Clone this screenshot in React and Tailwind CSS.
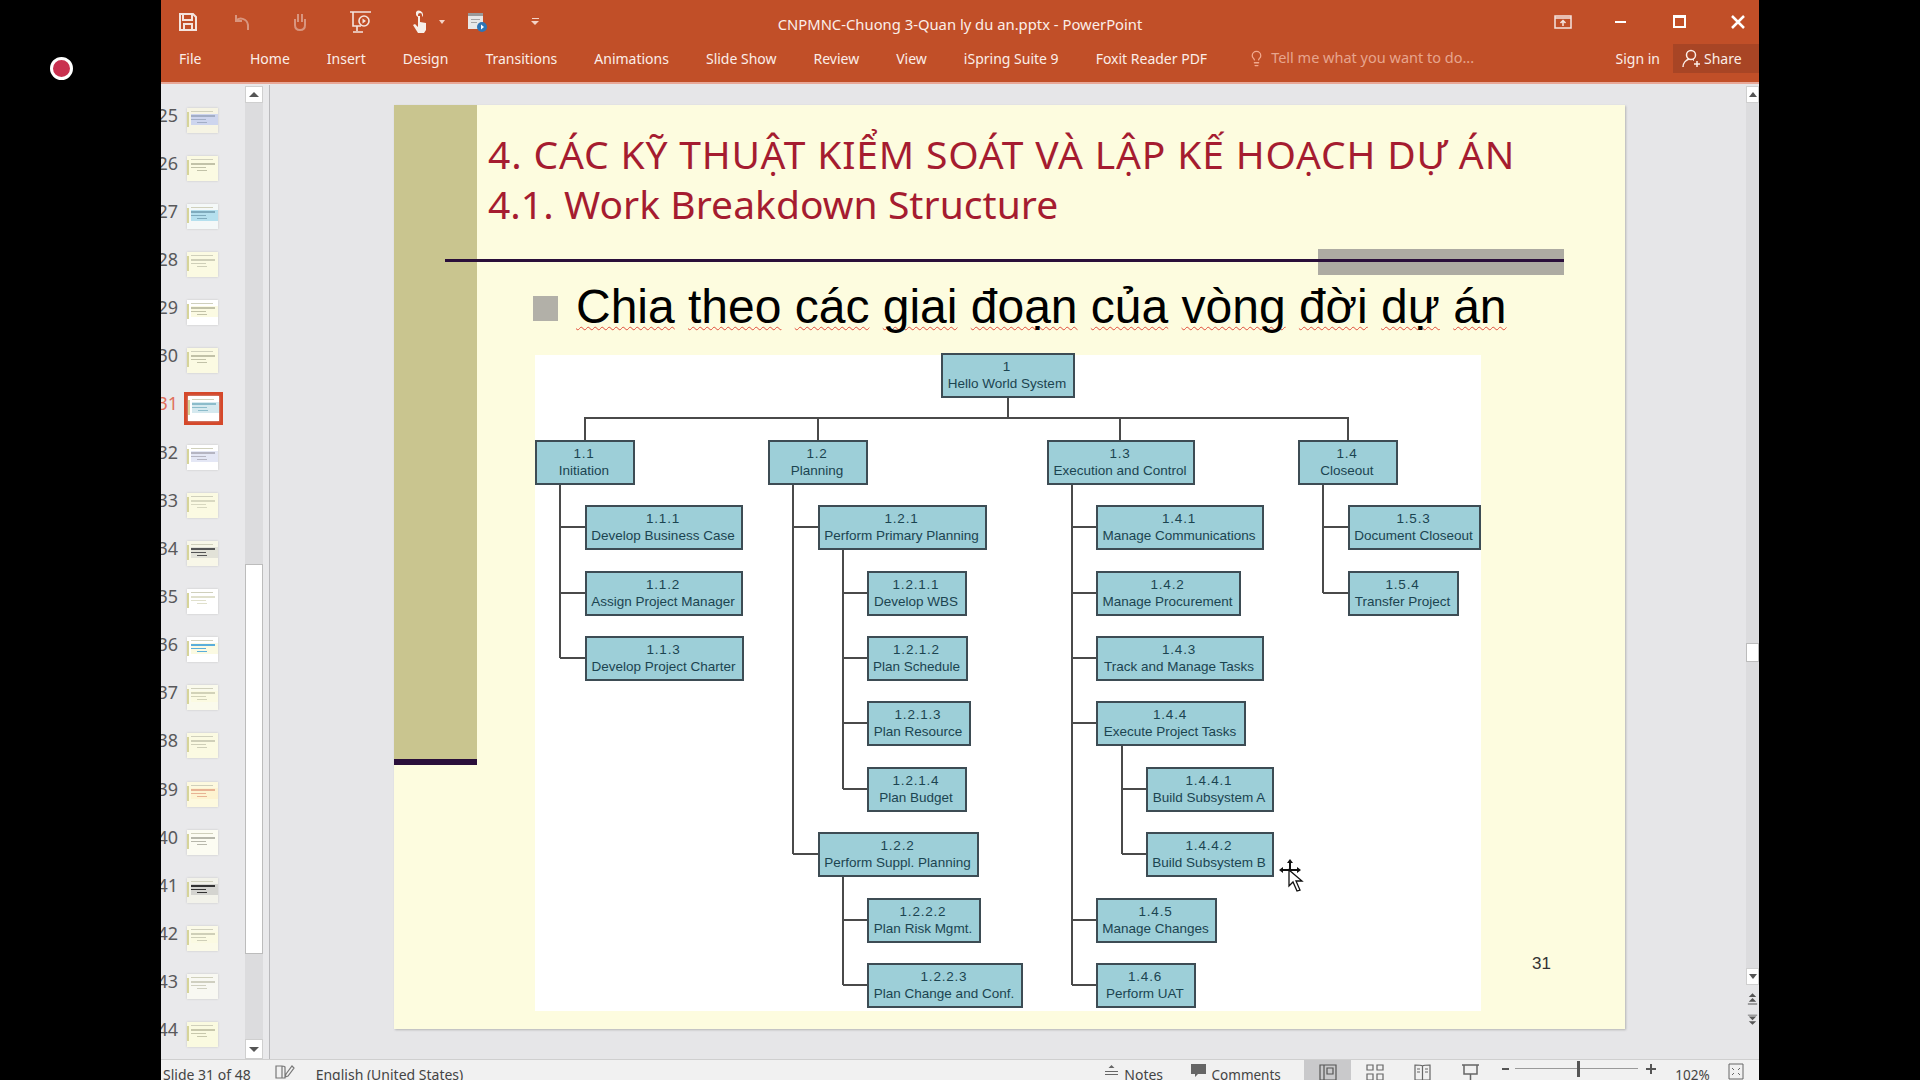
import { Lightbulb } from 'lucide-react';

const ui = "font-['Noto_Sans',sans-serif]";

const tabs = ['Home', 'Insert', 'Design', 'Transitions', 'Animations', 'Slide Show', 'Review', 'View', 'iSpring Suite 9', 'Foxit Reader PDF'];

const bulletWords = ['Chia', 'theo', 'các', 'giai', 'đoạn', 'của', 'vòng', 'đời', 'dự', 'án'];

// look of each mini slide in the left pane
const thumbs = [
  { n: 25, bg: 'bg-[#f6f4e4]', mid: 'bg-[#cdd5ee]', line: 'bg-[#a3aec6]' },
  { n: 26, bg: 'bg-[#fbfae2]', mid: 'bg-[#fbfae2]', line: 'bg-[#c2c2a8]' },
  { n: 27, bg: 'bg-[#f4f8f8]', mid: 'bg-[#b5e0ee]', line: 'bg-[#7fabbd]' },
  { n: 28, bg: 'bg-[#fbfae2]', mid: 'bg-[#fbfae2]', line: 'bg-[#cfcfb8]' },
  { n: 29, bg: 'bg-[#ffffff]', mid: 'bg-[#fbfae2]', line: 'bg-[#c2c2a8]' },
  { n: 30, bg: 'bg-[#fbfae2]', mid: 'bg-[#fbfae2]', line: 'bg-[#c2c2a8]' },
  { n: 31, bg: 'bg-[#ffffff]', mid: 'bg-[#d5e9ef]', line: 'bg-[#8cbccb]', active: true },
  { n: 32, bg: 'bg-[#ffffff]', mid: 'bg-[#e4e7f5]', line: 'bg-[#b5b5c2]' },
  { n: 33, bg: 'bg-[#fbfae2]', mid: 'bg-[#fbfae2]', line: 'bg-[#d8d8c0]' },
  { n: 34, bg: 'bg-[#f8f7e8]', mid: 'bg-[#e2e2d8]', line: 'bg-[#555555]' },
  { n: 35, bg: 'bg-[#ffffff]', mid: 'bg-[#ffffff]', line: 'bg-[#e0e0cc]' },
  { n: 36, bg: 'bg-[#ffffff]', mid: 'bg-[#fbfae2]', line: 'bg-[#5aaedb]' },
  { n: 37, bg: 'bg-[#fafaec]', mid: 'bg-[#fbfae2]', line: 'bg-[#d2d2b8]' },
  { n: 38, bg: 'bg-[#fbfae2]', mid: 'bg-[#fbfae2]', line: 'bg-[#cfcfb8]' },
  { n: 39, bg: 'bg-[#fdf9de]', mid: 'bg-[#fdf3d0]', line: 'bg-[#e8b394]' },
  { n: 40, bg: 'bg-[#fcfcf2]', mid: 'bg-[#fcfcf2]', line: 'bg-[#b8b8ac]' },
  { n: 41, bg: 'bg-[#f2f2ea]', mid: 'bg-[#d4d4d0]', line: 'bg-[#333333]' },
  { n: 42, bg: 'bg-[#fbfae8]', mid: 'bg-[#fbfae2]', line: 'bg-[#cfcfb8]' },
  { n: 43, bg: 'bg-[#f8f8f2]', mid: 'bg-[#f8f8f2]', line: 'bg-[#cfcfc0]' },
  { n: 44, bg: 'bg-[#fafae0]', mid: 'bg-[#fafae0]', line: 'bg-[#c8c8ac]' },
];

// diagram rows (page y of the top edge of a box)
const R = [505, 571, 636, 701, 767, 832, 898, 963];

const nodes = [
  { id: '1', label: 'Hello World System', x: 941, r: 1075, y: 353 },
  { id: '1.1', label: 'Initiation', x: 535, r: 635, y: 440 },
  { id: '1.2', label: 'Planning', x: 768, r: 868, y: 440 },
  { id: '1.3', label: 'Execution and Control', x: 1047, r: 1195, y: 440 },
  { id: '1.4', label: 'Closeout', x: 1298, r: 1398, y: 440 },
  { id: '1.1.1', label: 'Develop Business Case', x: 585, r: 743, y: R[0] },
  { id: '1.1.2', label: 'Assign Project Manager', x: 585, r: 743, y: R[1] },
  { id: '1.1.3', label: 'Develop Project Charter', x: 585, r: 744, y: R[2] },
  { id: '1.2.1', label: 'Perform Primary Planning', x: 818, r: 987, y: R[0] },
  { id: '1.2.1.1', label: 'Develop WBS', x: 867, r: 967, y: R[1] },
  { id: '1.2.1.2', label: 'Plan Schedule', x: 867, r: 968, y: R[2] },
  { id: '1.2.1.3', label: 'Plan Resource', x: 867, r: 971, y: R[3] },
  { id: '1.2.1.4', label: 'Plan Budget', x: 867, r: 967, y: R[4] },
  { id: '1.2.2', label: 'Perform Suppl. Planning', x: 818, r: 979, y: R[5] },
  { id: '1.2.2.2', label: 'Plan Risk Mgmt.', x: 867, r: 981, y: R[6] },
  { id: '1.2.2.3', label: 'Plan Change and Conf.', x: 867, r: 1023, y: R[7] },
  { id: '1.4.1', label: 'Manage Communications', x: 1096, r: 1264, y: R[0] },
  { id: '1.4.2', label: 'Manage Procurement', x: 1096, r: 1241, y: R[1] },
  { id: '1.4.3', label: 'Track and Manage Tasks', x: 1096, r: 1264, y: R[2] },
  { id: '1.4.4', label: 'Execute Project Tasks', x: 1096, r: 1246, y: R[3] },
  { id: '1.4.4.1', label: 'Build Subsystem A', x: 1146, r: 1274, y: R[4] },
  { id: '1.4.4.2', label: 'Build Subsystem B', x: 1146, r: 1274, y: R[5] },
  { id: '1.4.5', label: 'Manage Changes', x: 1096, r: 1217, y: R[6] },
  { id: '1.4.6', label: 'Perform UAT', x: 1096, r: 1196, y: R[7] },
  { id: '1.5.3', label: 'Document Closeout', x: 1348, r: 1481, y: R[0] },
  { id: '1.5.4', label: 'Transfer Project', x: 1348, r: 1459, y: R[1] },
];

// trunk x, start y, and the rows hanging off it
const trunks = [
  { x: 560, y: 484, to: 585, rows: [0, 1, 2] },
  { x: 793, y: 484, to: 818, rows: [0, 5] },
  { x: 843, y: 549, to: 867, rows: [1, 2, 3, 4] },
  { x: 843, y: 877, to: 867, rows: [6, 7] },
  { x: 1072, y: 484, to: 1096, rows: [0, 1, 2, 3, 6, 7] },
  { x: 1122, y: 746, to: 1146, rows: [4, 5] },
  { x: 1323, y: 484, to: 1348, rows: [0, 1] },
];

const Thumb = ({ t }) => (
  <div className={`flex h-[25px] w-[31px] shadow-[0_0_2px_#c4c4c4] ${t.bg}`}>
    <div className="mt-[4px] h-[15px] w-[2px] shrink-0 bg-[#d6d49a]" />
    <div className="flex flex-1 flex-col pl-[2px]">
      <div className="mt-[3px] h-[1px] w-[22px] bg-[#d0d0bc]" />
      <div className={`mt-[2px] flex h-[11px] flex-col gap-[2px] pt-[1px] ${t.mid}`}>
        <div className={`h-[2px] w-[24px] ${t.line}`} />
        <div className={`h-[1px] w-[15px] ${t.line}`} />
        <div className={`ml-[6px] h-[1px] w-[10px] ${t.line}`} />
      </div>
    </div>
  </div>
);

const Sidebar = () => (
  <div className={`flex w-[109px] shrink-0 overflow-hidden bg-[#e9e9eb] ${ui}`}>
    <div className="flex w-[84px] shrink-0 flex-col pt-[12px]">
      {thumbs.map((t) => (
        <div key={t.n} className="flex h-[48.15px] shrink-0 items-center">
          <div className={`flex w-[17px] shrink-0 justify-end pb-[11px] text-[18px] leading-[20px] ${t.active ? 'text-[#e0705c]' : 'text-[#59595b]'}`}>
            <span className="shrink-0">{t.n}</span>
          </div>
          {t.active ? (
            <div className="ml-[6px] border-[4px] border-[#d5482a]">
              <Thumb t={t} />
            </div>
          ) : (
            <div className="ml-[9px]">
              <Thumb t={t} />
            </div>
          )}
        </div>
      ))}
    </div>
    <div className="mt-[2px] flex h-[973px] w-[18px] shrink-0 flex-col bg-[#dcdcde]">
      <div className="flex h-[17px] shrink-0 items-center justify-center border border-[#cfcfcf] bg-white">
        <div className="h-0 w-0 border-x-[5px] border-b-[5px] border-x-transparent border-b-[#555555]" />
      </div>
      <div className="mt-[461px] h-[390px] shrink-0 border border-[#bcbcbc] bg-white" />
      <div className="mt-auto flex h-[20px] shrink-0 items-center justify-center border border-[#cfcfcf] bg-white">
        <div className="h-0 w-0 border-x-[5px] border-t-[5px] border-x-transparent border-t-[#555555]" />
      </div>
    </div>
    <div className="ml-[6px] mt-[1px] h-[975px] w-[1px] bg-[#b9b9bc]" />
  </div>
);

const Node = ({ n }) => (
  <div
    className="absolute flex h-[45px] flex-col items-center justify-center border-2 border-[#3d4c54] bg-[#9dcfd8] pr-[2px] font-['Liberation_Sans',sans-serif] text-[13.5px] leading-[16.5px] text-[#1b4450]"
    style={{ left: n.x - 535, top: n.y - 355, width: n.r - n.x }}
  >
    <span className="tracking-[0.8px]">{n.id}</span>
    <span className="whitespace-nowrap">{n.label}</span>
  </div>
);

const Diagram = () => (
  <div className="relative ml-[58px] h-[656px] w-[946px] bg-white">
    <svg className="absolute inset-0" width="946" height="656" viewBox="535 355 946 656" fill="none" stroke="#4a4a4a" strokeWidth="2">
      <path d="M585 440V418H1348V440M818 418V440M1120 418V440M1008 397V418" />
      {trunks.map((t) => (
        <path
          key={`${t.x}-${t.y}`}
          d={`M${t.x} ${t.y}V${R[t.rows[t.rows.length - 1]] + 22}` + t.rows.map((r) => `M${t.x} ${R[r] + 22}H${t.to}`).join('')}
        />
      ))}
    </svg>
    {nodes.map((n) => (
      <Node key={n.id} n={n} />
    ))}
  </div>
);

const Slide = () => (
  <div className="relative flex h-[924px] w-[1231px] bg-[#fdfcdf] shadow-[1px_1px_2px_#b5b5b5]">
    <div className="flex w-[83px] shrink-0 flex-col">
      <div className="h-[654px] bg-[#c9c58f]" />
      <div className="h-[6px] bg-[#2a0f3a]" />
    </div>
    <div className="flex flex-col">
      <div className="h-[130px] pl-[11px] pt-[24px] font-['Noto_Sans',sans-serif] text-[39px] leading-[50px] text-[#a51c30]">
        <div className="whitespace-nowrap tracking-[0.85px]">4. CÁC KỸ THUẬT KIỂM SOÁT VÀ LẬP KẾ HOẠCH DỰ ÁN</div>
        <div className="whitespace-nowrap tracking-[0.05px]">4.1. Work Breakdown Structure</div>
      </div>
      <div className="flex h-[120px] items-start gap-[18px] pl-[56px] pt-[44px] font-['Liberation_Sans',sans-serif]">
        <div className="mt-[17px] h-[25px] w-[25px] shrink-0 bg-[#b2b0a8]" />
        <div className="flex gap-[13.3px] whitespace-nowrap text-[48px] leading-[56px] text-black">
          {bulletWords.map((w) => (
            <span key={w} className="underline decoration-[#e04b3a] decoration-wavy decoration-1 underline-offset-[3px] [text-decoration-skip-ink:none]">
              {w}
            </span>
          ))}
        </div>
      </div>
      <Diagram />
    </div>
    {/* title rule + grey block */}
    <div className="absolute left-[924px] top-[144px] h-[26px] w-[246px] bg-[#adaba2]" />
    <div className="absolute left-[51px] top-[154px] h-[3px] w-[1119px] bg-[#2a0f3a]" />
    <div className="absolute left-[1138px] top-[849px] font-['Liberation_Sans',sans-serif] text-[17px] leading-[20px] text-[#333333]">31</div>
    {/* mouse cursor */}
    <svg className="absolute left-[884px] top-[753px]" width="26" height="36" viewBox="0 0 26 36">
      <path d="M12 1l3 4h-2v6h6V9l4 3-4 3v-2h-6v2h-2v-2H5v2l-4-3 4-3v2h6V5H9z" fill="#111" />
      <path d="M11 12v16l4-4 4 9 3-1-4-9h6z" fill="#fff" stroke="#111" strokeWidth="1.3" />
    </svg>
  </div>
);

const RightBar = () => (
  <div className="flex w-[13px] shrink-0 flex-col pt-[2px]">
    <div className="flex h-[17px] shrink-0 items-center justify-center border border-[#cfcfcf] bg-white">
      <div className="h-0 w-0 border-x-[4px] border-b-[5px] border-x-transparent border-b-[#555555]" />
    </div>
    <div className="h-[865px] shrink-0 bg-[#dcdcde] pt-[540px]">
      <div className="h-[19px] border border-[#bcbcbc] bg-white" />
    </div>
    <div className="flex h-[17px] shrink-0 items-center justify-center border border-[#cfcfcf] bg-white">
      <div className="h-0 w-0 border-x-[4px] border-t-[5px] border-x-transparent border-t-[#555555]" />
    </div>
    <svg className="mt-[5px] shrink-0" width="13" height="40" viewBox="0 0 14 40" fill="#555">
      <path d="M7 2l4 4H3zM7 7l4 4H3zM2 13h10v1H2zM2 25h10v1H2zM3 27h8l-4 4zM3 32h8l-4 4z" />
    </svg>
  </div>
);

const QuickIcons = () => (
  <div className="flex items-center pl-[17px]">
    <svg width="20" height="20" viewBox="0 0 20 20" fill="none" stroke="#f4e4de" strokeWidth="2">
      <path d="M2 2h13l3 3v13H2z" />
      <path d="M5 2v6h9V2M6 18v-6h8v6" />
    </svg>
    <svg className="ml-[35px] opacity-40" width="18" height="20" viewBox="0 0 18 20" fill="none" stroke="#fff" strokeWidth="2">
      <path d="M3 3v6h6M3 9c3-4 11-3 12 4v5" />
    </svg>
    <svg className="ml-[41px] opacity-40" width="16" height="20" viewBox="0 0 16 20" fill="none" stroke="#fff" strokeWidth="2">
      <path d="M6 2v8M10 2v8M3 7v6c0 3 2 5 5 5s5-2 5-5V7" />
    </svg>
    <svg className="ml-[41px]" width="23" height="24" viewBox="0 0 23 24" fill="none" stroke="#f4e4de" strokeWidth="1.6">
      <path d="M1 2h21M4 2v14h8M8 16v5M4 22h10" />
      <circle cx="15" cy="11" r="5" />
      <path d="M13.5 8.5v5l3.5-2.500z" fill="#f4e4de" stroke="none" />
    </svg>
    <svg className="ml-[38px]" width="18" height="24" viewBox="0 0 18 24" fill="#f7efe9">
      <path d="M6 2a4 4 0 0 1 7 3c0 1-1 2-1 2V5a2 2 0 0 0-4 0v2S6 6 6 4.500zM8 6h2v6l6 1v7l-2 3H8l-5-8 2-1 3 3z" />
    </svg>
    <div className="ml-[11px] h-0 w-0 border-x-[3px] border-t-[4px] border-x-transparent border-t-[#f4d4c8]" />
    <svg className="ml-[22px]" width="20" height="22" viewBox="0 0 20 22">
      <path d="M1 2h15v16H1z" fill="#e8e8e8" />
      <path d="M1 2h15v3H1z" fill="#9a9a9a" />
      <path d="M4 8h9v1H4zM4 11h6v1H4z" fill="#a5a5a5" />
      <circle cx="15" cy="16" r="5" fill="#2e75b6" />
      <path d="M14 13.500v5l3-2.500z" fill="#fff" />
    </svg>
    <div className="ml-[44px] flex flex-col items-center gap-[2px]">
      <div className="h-[1px] w-[7px] bg-[#f4d4c8]" />
      <div className="h-0 w-0 border-x-[4px] border-t-[4px] border-x-transparent border-t-[#f4d4c8]" />
    </div>
  </div>
);

const WindowButtons = () => (
  <div className="flex items-center justify-end pr-[14px]">
    <svg width="18" height="14" viewBox="0 0 18 14" fill="none" stroke="#f4e4de" strokeWidth="1.500">
      <path d="M1 1h16v12H1zM1 3h16" />
      <path d="M9 11V6M6.500 8L9 5.500 11.500 8" />
    </svg>
    <div className="ml-[43px] h-[2px] w-[11px] bg-white" />
    <div className="ml-[47px] h-[13px] w-[13px] border-2 border-t-[3px] border-white" />
    <svg className="ml-[45px]" width="14" height="14" viewBox="0 0 14 14" stroke="#fff" strokeWidth="2.500">
      <path d="M1 1l12 12M13 1L1 13" />
    </svg>
  </div>
);

const Ribbon = () => (
  <div className={`h-[84px] shrink-0 border-b-2 border-[#e8a898] bg-[#c14f28] text-[#fbeee8] ${ui}`}>
    <div className="grid h-[43px] grid-cols-[1fr_auto_1fr] items-center">
      <QuickIcons />
      <div className="mt-[5px] text-[14.8px]">CNPMNC-Chuong 3-Quan ly du an.pptx - PowerPoint</div>
      <WindowButtons />
    </div>
    <div className="flex h-[30px] items-center text-[14px]">
      <span className="ml-[18px] w-[71px] shrink-0">File</span>
      <div className="flex items-center gap-[37px]">
        {tabs.map((t) => (
          <span key={t} className="whitespace-nowrap">{t}</span>
        ))}
      </div>
      <Lightbulb className="ml-[41px] shrink-0 text-[#f2a98e]" size={17} strokeWidth={1.8} />
      <span className="ml-[6px] whitespace-nowrap text-[14.5px] text-[#e7a58e]">Tell me what you want to do...</span>
      <span className="ml-auto whitespace-nowrap">Sign in</span>
      <div className="ml-[13px] flex h-[29px] w-[86px] items-center gap-[3px] bg-[#a84525] pl-[9px]">
        <svg width="19" height="19" viewBox="0 0 19 19" fill="none" stroke="#fbeee8" strokeWidth="1.500">
          <circle cx="9" cy="6" r="4.500" />
          <path d="M1 18c0-4 3-7 6-8M11 11h1M12 15h6M15 12v6" />
        </svg>
        <span>Share</span>
      </div>
    </div>
  </div>
);

const StatusBar = () => (
  <div className={`relative flex h-[21px] shrink-0 items-start border-t border-[#cfcfcf] bg-[#f1f1f1] text-[14px] leading-[18px] text-[#444444] ${ui}`}>
    <span className="ml-[2px] mt-[6px] whitespace-nowrap">Slide 31 of 48</span>
    <svg className="ml-[24px] mt-[3px]" width="21" height="18" viewBox="0 0 21 18" fill="none" stroke="#777" strokeWidth="1.200">
      <path d="M1 3h6v12H1zM7 3c2 0 3 1 3 1v11H7M11 11l6-8 2 2-6 8-3 1z" />
    </svg>
    <span className="ml-[20px] mt-[6px] whitespace-nowrap">English (United States)</span>
    <svg className="ml-[641px] mt-[4px]" width="15" height="14" viewBox="0 0 15 14" fill="#666">
      <path d="M7.500 1l3 3h-6zM1 7h13v1H1zM1 10h13v1H1z" />
    </svg>
    <span className="ml-[5px] mt-[6px]">Notes</span>
    <svg className="ml-[27.5px] mt-[4px]" width="15" height="14" viewBox="0 0 15 14" fill="#666">
      <path d="M0 0h15v10H7l-3 3v-3H0z" />
    </svg>
    <span className="ml-[6px] mt-[6px] text-[13.5px]">Comments</span>
    <div className="ml-[23.5px] flex h-[20px] w-[47px] items-start justify-center bg-[#c9c9cb] pt-[4px]">
      <svg width="18" height="16" viewBox="0 0 18 16" fill="none" stroke="#555" strokeWidth="1.200">
        <path d="M1 1h16v15H1zM5 1v15M8 4h6v6H8z" />
      </svg>
    </div>
    <svg className="ml-[14.5px] mt-[4px]" width="18" height="16" viewBox="0 0 18 16" fill="none" stroke="#666" strokeWidth="1.200">
      <path d="M1 1h6v5H1zM11 1h6v5h-6zM1 10h6v6H1zM11 10h6v6h-6z" />
    </svg>
    <svg className="ml-[30px] mt-[4px]" width="17" height="16" viewBox="0 0 17 16" fill="none" stroke="#666" strokeWidth="1.200">
      <path d="M1 1c3 0 6 0 7.500 1C10 1 13 1 16 1v15H1zM8.500 2v14M3 5h3M3 8h3M11 5h3M11 8h3" />
    </svg>
    <svg className="ml-[31px] mt-[4px]" width="17" height="16" viewBox="0 0 17 16" fill="none" stroke="#666" strokeWidth="1.500">
      <path d="M0 1h17M2 1v9h13V1M8.500 10v6" />
    </svg>
    <div className="ml-[23px] mt-[8px] h-[2px] w-[7px] bg-[#555555]" />
    <div className="relative ml-[6px] mt-[8px] h-[1px] w-[123px] bg-[#9a9a9a]">
      <div className="absolute left-[62px] top-[-7px] h-[16px] w-[3px] bg-[#555555]" />
    </div>
    <div className="relative ml-[8px] mt-[4px] h-[10px] w-[10px]">
      <div className="absolute left-0 top-[4px] h-[2px] w-[10px] bg-[#555555]" />
      <div className="absolute left-[4px] top-0 h-[10px] w-[2px] bg-[#555555]" />
    </div>
    <span className="ml-[19.5px] mt-[6px] text-[13.5px]">102%</span>
    <svg className="ml-[18px] mt-[3px]" width="16" height="17" viewBox="0 0 16 17" fill="none" stroke="#666" strokeWidth="1">
      <path d="M1 1h14v15H1zM4 5l2 2M12 5l-2 2M4 12l2-2M12 12l-2-2" />
    </svg>
  </div>
);

const App = () => {
  return (
    <div className="flex h-[1080px] w-[1920px] overflow-hidden bg-black">
      <div className="w-[161px] shrink-0 pl-[50px] pt-[57px]">
        <div className="h-[23px] w-[23px] rounded-full border-[3px] border-white bg-[#c9304f]" />
      </div>
      <div className="flex h-[1080px] w-[1598px] shrink-0 flex-col overflow-hidden bg-[#e6e6e8]">
        <Ribbon />
        <div className="flex h-[975px] shrink-0 overflow-hidden">
          <Sidebar />
          <div className="flex-1 pl-[124px] pt-[21px]">
            <Slide />
          </div>
          <RightBar />
        </div>
        <StatusBar />
      </div>
    </div>
  );
};

export default App;
